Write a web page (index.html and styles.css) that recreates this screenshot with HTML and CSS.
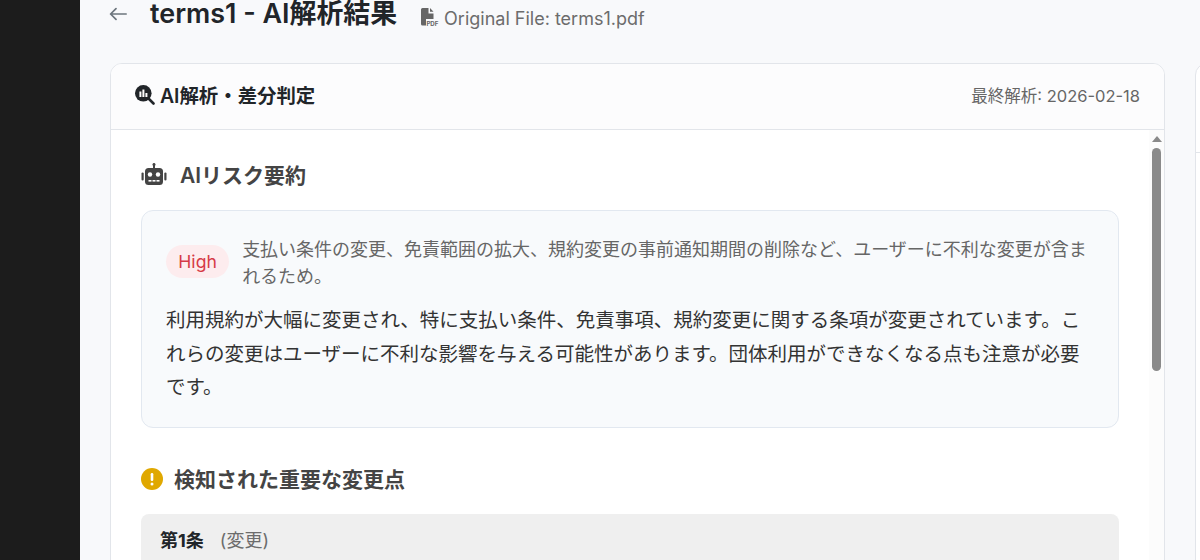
FILE: index.html
```html
<!DOCTYPE html>
<html lang="ja">
<head>
    <meta charset="UTF-8">
    <title>terms1 - AI解析結果</title>
    <link rel="stylesheet" href="styles.css">
</head>
<body>
    <div class="layout">
        <aside class="sidebar"></aside>
        <main class="main">
            <header class="pageHeader">
                <svg class="backIcon" viewBox="0 0 18 14"><path d="M17.2 7H1.6M7 1.6L1.6 7 7 12.4" fill="none" stroke="currentColor" stroke-width="1.7" stroke-linecap="round" stroke-linejoin="round"/></svg>
                <h1 class="pageTitle">terms1 - AI解析結果</h1>
                <span class="fileName">
                    <svg class="pdfIcon" viewBox="0 0 18 20"><path d="M1.5 0H7.5V5.5H12.5V11H5V17.5H1.5A1.5 1.5 0 0 1 0 16V1.5A1.5 1.5 0 0 1 1.5 0z" fill="currentColor"/><path d="M9 0L12.5 3.8H9z" fill="currentColor"/><text x="5.4" y="18" class="pdfText" textLength="12" lengthAdjust="spacingAndGlyphs">PDF</text></svg>
                    Original File: terms1.pdf
                </span>
            </header>
            <div class="columns">
                <section class="card">
                    <div class="cardHeader">
                        <h2 class="cardTitle">
                            <svg class="searchIcon" viewBox="0 0 20 20"><circle cx="8.3" cy="8.3" r="8.3" fill="#212529"/><rect x="4.4" y="6.5" width="2" height="5.5" fill="#fff"/><rect x="7.4" y="4.5" width="2" height="7.5" fill="#fff"/><rect x="10.4" y="8" width="2" height="4" fill="#fff"/><path d="M14 14l4.5 4.5" stroke="#212529" stroke-width="2.6" stroke-linecap="round"/></svg>
                            AI解析・差分判定
                        </h2>
                        <span class="lastDate">最終解析: 2026-02-18</span>
                    </div>
                    <div class="cardBody">
                        <div class="scrollArea">
                            <h3 class="sectionTitle robotTitle">
                                <svg class="robotIcon" viewBox="0 0 26 22"><rect x="4" y="5" width="18" height="17" rx="3.5" fill="currentColor"/><rect x="12" y="0.5" width="2" height="5" fill="currentColor"/><circle cx="13" cy="1.5" r="1.5" fill="currentColor"/><rect x="0.5" y="9.5" width="2.2" height="8" rx="1.1" fill="currentColor"/><rect x="23.3" y="9.5" width="2.2" height="8" rx="1.1" fill="currentColor"/><circle cx="9" cy="11.5" r="2.2" fill="#fff"/><circle cx="17" cy="11.5" r="2.2" fill="#fff"/><rect x="7.5" y="17" width="3" height="1.6" fill="#fff"/><rect x="11.5" y="17" width="3" height="1.6" fill="#fff"/><rect x="15.5" y="17" width="3" height="1.6" fill="#fff"/></svg>
                                AIリスク要約
                            </h3>
                            <div class="summaryBox">
                                <div class="riskRow">
                                    <span class="riskBadge">High</span>
                                    <p class="riskReason">支払い条件の変更、免責範囲の拡大、規約変更の事前通知期間の削除など、ユーザーに不利な変更が含まれるため。</p>
                                </div>
                                <p class="summaryText">利用規約が大幅に変更され、特に支払い条件、免責事項、規約変更に関する条項が変更されています。これらの変更はユーザーに不利な影響を与える可能性があります。団体利用ができなくなる点も注意が必要です。</p>
                            </div>
                            <h3 class="sectionTitle warnTitle">
                                <svg class="warnIcon" viewBox="0 0 22 22"><circle cx="11" cy="11" r="11" fill="#e0a800"/><rect x="9.7" y="5" width="2.6" height="8" rx="1.2" fill="#fff"/><circle cx="11" cy="16" r="1.5" fill="#fff"/></svg>
                                検知された重要な変更点
                            </h3>
                            <div class="changeItem">
                                <strong>第1条</strong>
                                <span class="changeType">(変更)</span>
                            </div>
                        </div>
                        <div class="scrollbar">
                            <span class="scrollArrow"></span>
                            <span class="scrollThumb"></span>
                        </div>
                    </div>
                </section>
                <section class="card sideCard">
                    <div class="sideHeader"></div>
                </section>
            </div>
        </main>
    </div>
</body>
</html>
```

FILE: styles.css
```css
* {
    margin: 0;
    padding: 0;
    box-sizing: border-box;
}

html, body {
    height: 100%;
    overflow: hidden;
}

body {
    font-family: Inter, "Noto Sans CJK JP", sans-serif;
    color: #212529;
    background: #f8f9fb;
}

.layout {
    display: flex;
    height: 560px;
}

.sidebar {
    width: 80px;
    flex-shrink: 0;
    background: #1c1c1c;
}

.main {
    flex: 1;
    min-width: 0;
    padding: 0 0 0 30px;
    background: #f8f9fb;
    overflow: hidden;
}

.pageHeader {
    display: flex;
    align-items: center;
    height: 27px;
    margin-bottom: 36px;
}

.backIcon {
    width: 18px;
    height: 14px;
    color: #6c757d;
    margin: 1px 23px 0 -1px;
}

.pageTitle {
    font-size: 26.9px;
    font-weight: 600;
    line-height: 27px;
    margin-right: 24px;
}

.fileName {
    display: flex;
    align-items: center;
    gap: 5px;
    font-size: 18px;
    color: #6c6c6c;
    margin-top: 9px;
}

.pdfIcon {
    width: 18px;
    height: 20px;
    color: #666;
}

.pdfText {
    font-size: 6.6px;
    font-weight: 700;
    fill: #666;
}

.columns {
    display: flex;
    gap: 30px;
}

.card {
    width: 1055px;
    height: 560px;
    flex-shrink: 0;
    background: #fff;
    border: 1px solid #e2e5ea;
    border-radius: 12px;
    overflow: hidden;
}

.cardHeader {
    display: flex;
    align-items: center;
    justify-content: space-between;
    height: 66px;
    padding: 0 24px 4px;
    background: #fcfcfd;
    border-bottom: 1px solid #e2e5ea;
}

.cardTitle {
    display: flex;
    align-items: center;
    gap: 5px;
    font-size: 19.4px;
    font-weight: 600;
}

.searchIcon {
    width: 20px;
    height: 20px;
}

.lastDate {
    font-size: 16.5px;
    color: #666;
}

.cardBody {
    display: flex;
}

.scrollArea {
    flex: 1;
    min-width: 0;
    padding: 31px 30px 0 30px;
}

.sectionTitle {
    display: flex;
    align-items: center;
    font-size: 21px;
    font-weight: 600;
    color: #444;
}

.robotTitle {
    gap: 13px;
    height: 26px;
    margin-bottom: 23px;
}

.robotIcon {
    width: 26px;
    height: 22px;
}

.summaryBox {
    background: #f8fafc;
    border: 1px solid #e2e8f0;
    border-radius: 12px;
    padding: 24px;
    height: 218px;
}

.riskRow {
    display: flex;
    align-items: flex-start;
    gap: 13px;
    margin-bottom: 14px;
}

.riskBadge {
    flex-shrink: 0;
    margin-top: 10px;
    padding: 4px 12.3px;
    border-radius: 17px;
    background: #fdecee;
    color: #d63a47;
    font-size: 17.6px;
    line-height: 25px;
}

.riskReason {
    margin-top: 1px;
    font-size: 18px;
    line-height: 27px;
    color: #666;
}

.summaryText {
    font-size: 19.5px;
    line-height: 33.6px;
    color: #333;
}

.warnTitle {
    gap: 11px;
    height: 28px;
    margin: 36px 0 22px;
}

.warnIcon {
    width: 22px;
    height: 22px;
    margin-top: 1px;
}

.changeItem {
    height: 60px;
    padding: 12px 19px;
    background: #efefef;
    border-radius: 8px 8px 0 0;
    font-size: 18px;
}

.changeItem strong {
    font-weight: 700;
    margin-right: 11px;
}

.changeType {
    color: #6c6c6c;
}

.scrollbar {
    width: 15px;
    flex-shrink: 0;
    height: 494px;
    background: #fcfcfc;
    display: flex;
    flex-direction: column;
    align-items: center;
}

.scrollArrow {
    width: 0;
    height: 0;
    margin: 6px 0 6px;
    border-left: 5px solid transparent;
    border-right: 5px solid transparent;
    border-bottom: 6px solid #8a8a8a;
}

.scrollThumb {
    width: 9px;
    height: 223px;
    border-radius: 5px;
    background: #8a8a8a;
}

.sideHeader {
    height: 89px;
    border-bottom: 1px solid #e2e5ea;
}
```
